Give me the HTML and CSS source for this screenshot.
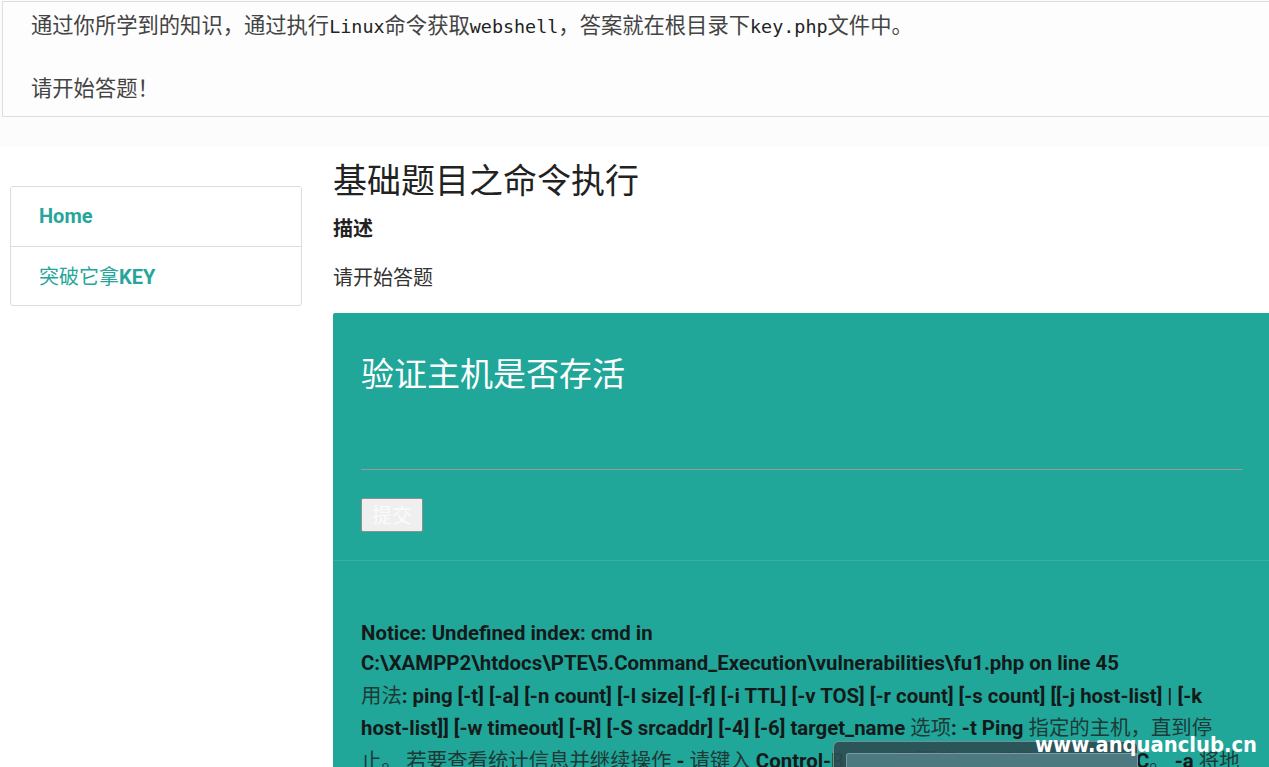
FILE: index.html
```html
<!DOCTYPE html>
<html lang="zh">
<head>
<meta charset="utf-8">
<title>基础题目之命令执行</title>
<link rel="stylesheet" href="styles.css">
</head>
<body>
<div class="notice-wrap">
  <div class="notice">
    <p class="line">通过你所学到的知识，通过执行<span class="mono">Linux</span>命令获取<span class="mono">webshell</span>，答案就在根目录下<span class="mono">key.php</span>文件中。</p>
    <p class="line blank">&nbsp;</p>
    <p class="line">请开始答题！</p>
  </div>
</div>

<div class="layout">
  <nav class="side">
    <a class="item" href="#"><span class="lat">Home</span></a>
    <a class="item" href="#"><span class="cn">突破它拿</span><span class="lat">KEY</span></a>
  </nav>

  <main class="main">
    <h1 class="title">基础题目之命令执行</h1>
    <h4 class="subtitle">描述</h4>
    <p class="desc">请开始答题</p>

    <section class="panel">
      <div class="panel-top">
        <h2 class="panel-title">验证主机是否存活</h2>
        <div class="rule"></div>
        <button class="submit" type="button">提交</button>
      </div>
      <div class="panel-body">
        <p class="output">Notice: Undefined index: cmd in C:\XAMPP2\htdocs\PTE\5.Command_Execution\vulnerabilities\fu1.php on line 45<br><span class="cn">用法</span>: ping [-t] [-a] [-n count] [-l size] [-f] [-i TTL] [-v TOS] [-r count] [-s count] [[-j host-list] | [-k host&#8209;list]] [-w timeout] [-R] [-S srcaddr] [-4] [-6] target_name <span class="cn">选项</span>: -t Ping <span class="cn">指定的主机，直到停止。 若要查看统计信息并继续操作</span> - <span class="cn">请键入</span> Control-Break; <span class="cn">若要停止</span> - <span class="cn">请键入</span> Control-C<span class="cn">。</span> -a <span class="cn">将地址解析为主机名。</span></p>
      </div>
    </section>
  </main>
</div>

<div class="glass"><div class="glass-inner"></div></div>
<div class="watermark">www.anquanclub.cn</div>
</body>
</html>
```

FILE: styles.css
```css
html, body {
  margin: 0;
  padding: 0;
  background: #ffffff;
  overflow: hidden;
}

body {
  width: 1269px;
  height: 767px;
  position: relative;
  font-family: "Roboto", "Noto Sans CJK SC", sans-serif;
  color: #333333;
}

/* top notice */
.notice-wrap {
  background: #fcfcfc;
  padding: 1px 0 30px 2px;
}

.notice {
  width: 1300px;
  border: 1px solid #dddddd;
  background: #fdfdfd;
  padding: 6px 0 13px 28px;
  box-sizing: border-box;
}

.line {
  margin: 0;
  height: 31.5px;
  font-family: "Noto Sans CJK SC", sans-serif;
  font-size: 21.3px;
  line-height: 31.5px;
  color: #444444;
  font-weight: 400;
}

.mono {
  font-family: "DejaVu Sans Mono", "Liberation Mono", monospace;
  font-size: 18.4px;
  line-height: 10px;
  color: #222222;
}

/* layout */
.layout {
  display: flex;
  align-items: flex-start;
}

.side {
  flex: none;
  margin: 39px 0 0 10px;
  width: 292px;
  box-sizing: border-box;
  border: 1px solid #dddddd;
  border-radius: 3px;
  display: flex;
  flex-direction: column;
}

.item {
  display: block;
  height: 59px;
  line-height: 58px;
  padding-left: 28px;
  text-decoration: none;
  color: #26a69a;
  font-size: 20px;
  box-sizing: border-box;
}

.item + .item {
  border-top: 1px solid #dddddd;
}

.item .lat {
  font-family: "Roboto", sans-serif;
  font-weight: 700;
}

.item .cn {
  font-family: "Noto Sans CJK SC", sans-serif;
  font-weight: 400;
}

.main {
  flex: none;
  margin: 13px 0 0 31px;
  width: 938px;
}

.title {
  margin: 0;
  font-family: "Noto Sans CJK SC", sans-serif;
  font-size: 34px;
  line-height: 37px;
  font-weight: 400;
  color: #222222;
}

.subtitle {
  margin: 16px 0 0 0;
  font-family: "Noto Sans CJK SC", sans-serif;
  font-size: 20px;
  line-height: 30px;
  font-weight: 700;
  color: #222222;
}

.desc {
  margin: 19px 0 0 0;
  font-family: "Noto Sans CJK SC", sans-serif;
  font-size: 20px;
  line-height: 30px;
  font-weight: 400;
  color: #333333;
}

/* panel */
.panel {
  margin-top: 21px;
  background: #21a69a;
  border-radius: 2px;
  height: 480px;
}

.panel-top {
  padding: 41px 28px 28px 28px;
}

.panel-title {
  margin: 0;
  font-family: "Noto Sans CJK SC", sans-serif;
  font-size: 33px;
  line-height: 36px;
  font-weight: 400;
  color: #ffffff;
}

.rule {
  margin-top: 79px;
  height: 1px;
  background: #999999;
}

.submit {
  display: block;
  margin-top: 28px;
  width: 62px;
  height: 34px;
  padding: 0;
  background: #efefef;
  border: 1px solid #8f8f8f;
  border-radius: 2px;
  font-family: "Noto Sans CJK SC", sans-serif;
  font-size: 20px;
  color: #fbfbfb;
}

.panel-body {
  border-top: 1px solid rgba(255, 255, 255, 0.1);
  padding: 57px 28px 0 28px;
}

.output {
  margin: 0;
  font-family: "Roboto", sans-serif;
  font-weight: 700;
  font-size: 20.4px;
  line-height: 30.5px;
  color: #141a19;
}

.output .cn {
  font-family: "Noto Sans CJK SC", sans-serif;
  font-weight: 400;
  color: #1d3a36;
}

/* overlays */
.glass {
  position: absolute;
  left: 833px;
  top: 741px;
  width: 305px;
  height: 40px;
  border-radius: 6px;
  background: rgba(46, 78, 84, 0.92);
  border: 1px solid rgba(200, 220, 225, 0.45);
  box-sizing: border-box;
  padding: 11px 0 0 12px;
}

.glass-inner {
  width: 292px;
  height: 30px;
  border-radius: 3px;
  background: #4d7a80;
  border: 1px solid rgba(200, 220, 225, 0.35);
  box-sizing: border-box;
}

.watermark {
  position: absolute;
  left: 1035px;
  top: 732px;
  font-family: "DejaVu Sans", sans-serif;
  font-weight: 700;
  font-size: 22px;
  line-height: 26px;
  color: #ffffff;
  transform: scaleX(0.89);
  transform-origin: left center;
}
```
